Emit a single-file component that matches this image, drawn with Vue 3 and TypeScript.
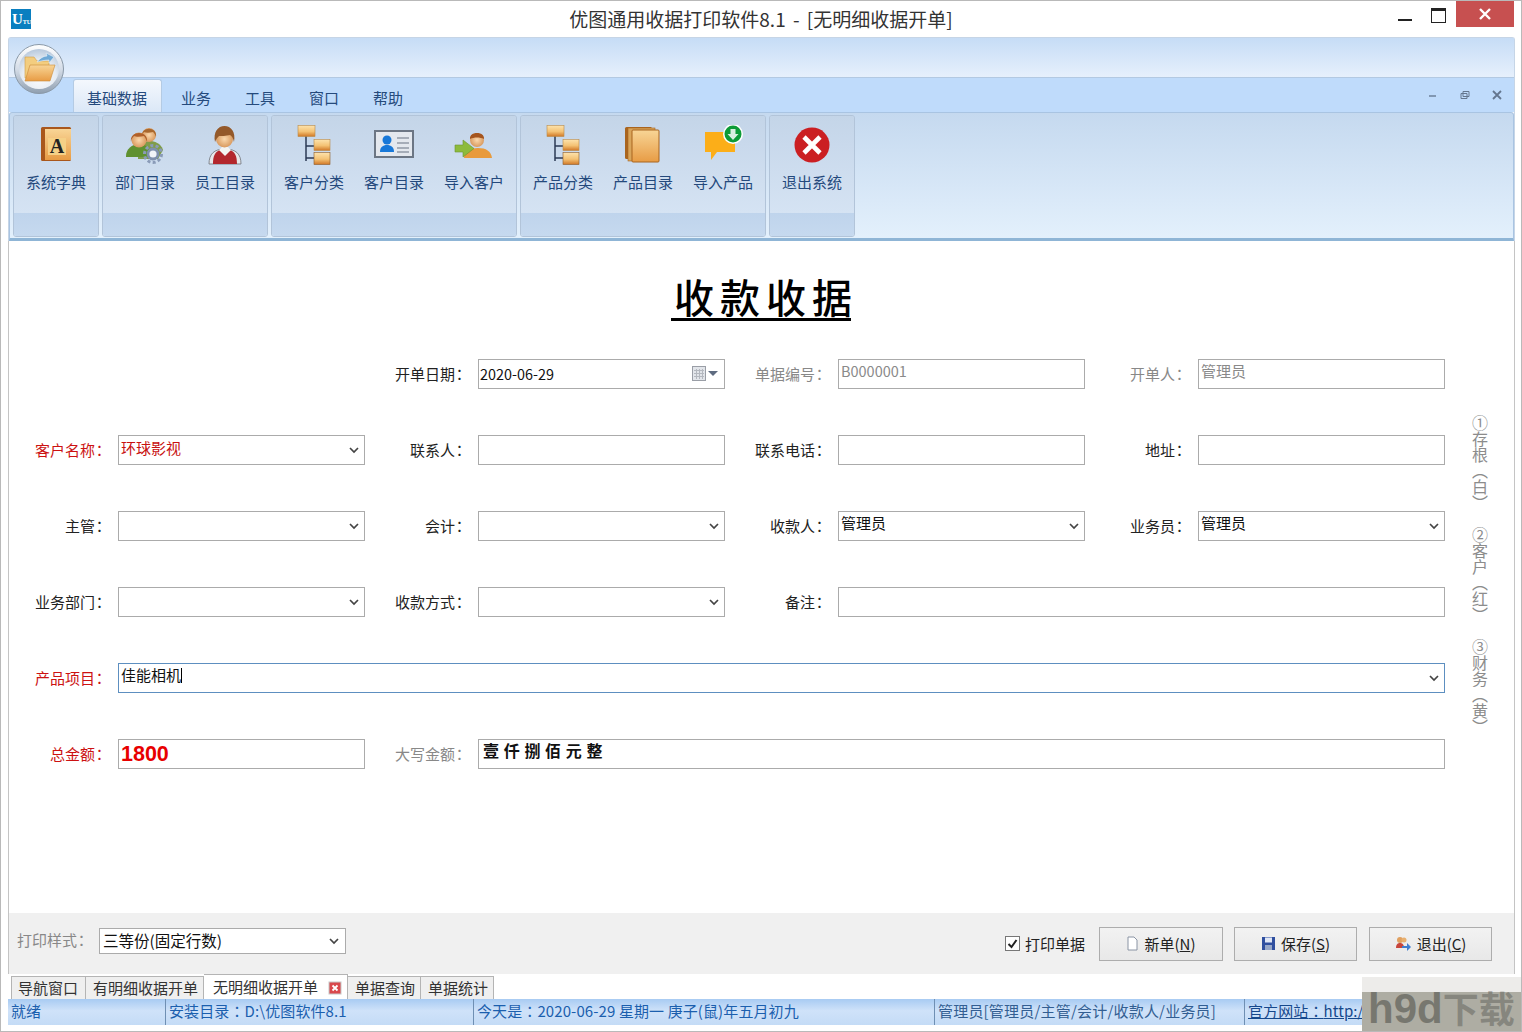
<template>
  <div class="window">
    <header class="titlebar">
      <div class="logo"><span class="logo-u">U</span><span class="logo-tu">TU</span></div>
      <div class="title">优图通用收据打印软件8.1 - [无明细收据开单]</div>
      <div class="win-btns">
        <span class="win-min"></span>
        <span class="win-max"></span>
        <span class="win-close">
          <svg width="14" height="12" viewBox="0 0 14 12"><path d="M2 1l10 10M12 1L2 11" stroke="#fff" stroke-width="2.4" /></svg>
        </span>
      </div>
    </header>

    <div class="main">
      <section class="ribbon">
        <svg width="0" height="0" class="defs">
          <defs>
            <linearGradient id="gold" x1="0" y1="0" x2="0" y2="1"><stop offset="0" stop-color="#f8d596" /><stop offset="1" stop-color="#e89c45" /></linearGradient>
            <linearGradient id="goldbox" x1="0" y1="0" x2="0" y2="1"><stop offset="0" stop-color="#fde3ad" /><stop offset=".55" stop-color="#f4c274" /><stop offset="1" stop-color="#d07726" /></linearGradient>
            <linearGradient id="orb" x1="0" y1="0" x2="0" y2="1"><stop offset="0" stop-color="#ffffff" /><stop offset=".5" stop-color="#d5dde8" /><stop offset="1" stop-color="#8f9fb0" /></linearGradient>
            <radialGradient id="orbin" cx=".5" cy=".7" r=".7"><stop offset="0" stop-color="#fbfcfe" /><stop offset=".6" stop-color="#e6ecf3" /><stop offset="1" stop-color="#b7c8dc" /></radialGradient>
            <radialGradient id="skin"><stop offset="0" stop-color="#fbd9ae" /><stop offset="1" stop-color="#d99a5f" /></radialGradient>
          </defs>
        </svg>
        <div class="qat"></div>
        <div class="orb">
          <svg width="52" height="52" viewBox="0 0 52 52">
            <circle cx="26" cy="26" r="24.5" fill="url(#orb)" stroke="#8a99a8" />
            <circle cx="26" cy="26" r="20" fill="url(#orbin)" />
            <path d="M12 35V14h9l3 4h12v17z" fill="#f3cd7f" stroke="#d29a45" stroke-width=".6" />
            <path d="M24 19c3-4 7-6 10-6l-1-3 8 4-5 6v-3c-4 0-8 1-12 2z" fill="#6fa9d6" stroke="#e8f2fa" stroke-width=".6" />
            <path d="M12 38l5-16h25l-5 16z" fill="url(#gold)" stroke="#c98a36" stroke-width=".6" />
          </svg>
        </div>
        <nav class="tabs">
          <span v-for="(t, i) in ribbonTabs" :key="t" class="tab" :class="{ active: i === 0 }">{{ t }}</span>
          <div class="mdi-btns">
            <svg width="10" height="10" viewBox="0 0 10 10"><path d="M1 6h7" stroke="#7286a0" stroke-width="1.6" /></svg>
            <svg width="10" height="10" viewBox="0 0 10 10"><path d="M3 1.500h6v5H3zM1 3.500h6v5H1z" fill="#bfdbfb" stroke="#64768e" /></svg>
            <svg width="10" height="10" viewBox="0 0 10 10"><path d="M1 1l8 8M9 1L1 9" stroke="#64768e" stroke-width="1.8" /></svg>
          </div>
        </nav>
        <div class="panel">
          <div v-for="(group, gi) in ribbonGroups" :key="gi" class="group">
            <div class="group-body">
              <div v-for="b in group" :key="b.label" class="rb">
                <svg class="rb-icon" width="40" height="40" viewBox="0 0 40 40">
                  <template v-if="b.icon === 'book'">
                    <rect x="5" y="2" width="30" height="34" rx="1.500" fill="#a9571c" />
                    <rect x="9" y="4" width="26" height="31" fill="url(#gold)" />
                    <rect x="12" y="13" width="18" height="17" fill="#f5d086" />
                    <text x="21" y="28" text-anchor="middle" class="book-a">A</text>
                  </template>
                  <template v-else-if="b.icon === 'dept'">
                    <path d="M13 24c1-6 8-8 12-8s11 2 13 9l-5 9H13z" fill="#7f9c4a" />
                    <circle cx="24" cy="10" r="7" fill="url(#skin)" />
                    <path d="M17 12c-2-11 16-11 14 0-1-3-2-4-3-5-4 1-7 1-9 0-1 1-2 3-2 5z" fill="#a9682e" />
                    <path d="M1 31c0-7 6-12 13-12s11 5 12 10v3H1z" fill="#5f9130" />
                    <circle cx="14" cy="15" r="7.500" fill="url(#skin)" />
                    <path d="M6 17c-2-12 18-12 16 0-1-3-2-5-3-6-4 1-8 1-10 0-1 1-3 3-3 6z" fill="#b0602a" />
                    <circle cx="28" cy="29" r="8.500" fill="none" stroke="#8a9bb8" stroke-width="3" stroke-dasharray="3 2.300" />
                    <circle cx="28" cy="29" r="5" fill="#f1f4f8" stroke="#7f90ad" stroke-width="2.800" />
                  </template>
                  <template v-else-if="b.icon === 'staff'">
                    <path d="M4 39c0-10 5-15 16-15s16 5 16 15z" fill="#e6e8eb" stroke="#6d7178" stroke-width=".8" />
                    <path d="M8 39c0-8 2-13 8-14l4 5 4-5c6 1 8 6 8 14z" fill="#b3272d" />
                    <path d="M14 25l6 6 6-6-3-3h-6z" fill="#f4f4f2" />
                    <circle cx="19.500" cy="14" r="8.500" fill="url(#skin)" />
                    <path d="M10 17c-2-10 3-16 9.500-16S31 7 29 17c-1-4-2-6-4-7-4 1-9 1-11 1-1 1-3 3-4 6z" fill="#94592a" />
                  </template>
                  <template v-else-if="b.icon === 'tree'">
                    <path d="M12 10v26M12 21h9M12 33h9" fill="none" stroke="#2b3a55" stroke-width="1.500" />
                    <rect x="4" y="0.500" width="17" height="11" fill="url(#goldbox)" stroke="#b98a4a" stroke-width=".6" />
                    <rect x="20" y="14.500" width="16" height="11" fill="url(#goldbox)" stroke="#b98a4a" stroke-width=".6" />
                    <rect x="20" y="27.500" width="16" height="12" fill="url(#goldbox)" stroke="#8b5a2a" stroke-width=".6" />
                  </template>
                  <template v-else-if="b.icon === 'card'">
                    <rect x="1" y="6" width="38" height="26" fill="#e4e8ee" stroke="#6c7684" stroke-width="2" />
                    <circle cx="13" cy="15" r="4.500" fill="#1878d8" />
                    <path d="M6 27c0-5 3-7 7-7s7 2 7 7z" fill="#1878d8" />
                    <path d="M23 13h12M23 18h12M23 23h12M23 27h12" stroke="#a6adb8" stroke-width="2" />
                  </template>
                  <template v-else-if="b.icon === 'import'">
                    <path d="M10 33c0-7 6-10 14-10s13 3 14 10z" fill="#e89a3c" />
                    <circle cx="23" cy="15" r="7" fill="url(#skin)" />
                    <path d="M16 14c-1-8 15-8 14 0-4-2-10-2-14 0z" fill="#a5551e" />
                    <path d="M1 20h8v-5l11 8.500-11 8.500v-5H1z" fill="#8dbb3c" stroke="#6c9430" stroke-width=".6" />
                  </template>
                  <template v-else-if="b.icon === 'stack'">
                    <rect x="2" y="2" width="27" height="32" rx="1.500" fill="#a9651f" />
                    <rect x="5" y="3" width="27" height="33" fill="#d9a55b" stroke="#a9651f" stroke-width=".6" />
                    <rect x="9" y="5" width="27" height="32" rx="1" fill="url(#gold)" stroke="#a9651f" stroke-width="1" />
                  </template>
                  <template v-else-if="b.icon === 'chat'">
                    <path d="M2 7h30v20H14l-6 8v-8H2z" fill="#fcae18" />
                    <circle cx="30" cy="9" r="10" fill="#fff" />
                    <circle cx="30" cy="9" r="8.500" fill="#0c9b37" />
                    <path d="M27.500 4h5v5h3l-5.500 6-5.500-6h3z" fill="#d8efe0" />
                  </template>
                  <template v-else>
                    <circle cx="20" cy="20" r="17.500" fill="#cb1f22" />
                    <path d="M12 12l16 16M28 12L12 28" stroke="#fff" stroke-width="4.600" />
                  </template>
                </svg>
                <span class="rb-label">{{ b.label }}</span>
              </div>
            </div>
            <div class="group-foot"></div>
          </div>
        </div>
      </section>

      <section class="form-area">
        <h1 class="doc-title">收款收据</h1>
        <div class="form-row-wrap">
          <div class="form-grid">
            <template v-for="f in fields" :key="f.label">
              <label
                class="f-label"
                :class="[f.tone, { muted: f.muted }]"
                :style="f.start ? { gridColumnStart: f.start } : undefined"
              >{{ f.label }}<span class="colon">：</span></label>
              <div
                class="ctrl"
                :class="[f.tone, { focused: f.focused, muted: f.muted, picker: f.kind === 'select' }]"
                :style="f.span ? { gridColumn: `span ${f.span}` } : undefined"
              >
                <span class="ctrl-text" :class="f.textClass">{{ f.value }}<i v-if="f.focused" class="caret"></i></span>
                <svg v-if="f.kind === 'select'" class="chev" width="10" height="7" viewBox="0 0 10 7"><path d="M1 1l4 4 4-4" fill="none" stroke="#444" stroke-width="1.7" /></svg>
                <svg v-if="f.kind === 'date'" class="cal" width="26" height="16" viewBox="0 0 26 16">
                  <rect x="0.500" y="0.500" width="13" height="14" fill="#e2e5ea" stroke="#9a9ea6" />
                  <path d="M2 4.500h10M2 7.500h10M2 10.500h10M4.500 3v10M7.500 3v10M10.500 3v10" stroke="#b4b8bf" />
                  <path d="M16 5h10l-5 5z" fill="#5e6b80" />
                </svg>
              </div>
            </template>
          </div>
          <div class="copies">
            <span v-for="c in copies" :key="c">{{ c }}</span>
          </div>
        </div>
      </section>

      <section class="actions">
        <span class="print-label">打印样式<span class="colon">：</span></span>
        <div class="ctrl print-select">
          <span class="ctrl-text plain">三等份(固定行数)</span>
          <svg class="chev" width="10" height="7" viewBox="0 0 10 7"><path d="M1 1l4 4 4-4" fill="none" stroke="#444" stroke-width="1.7" /></svg>
        </div>
        <div class="spacer"></div>
        <label class="check">
          <span class="check-box">
            <svg width="11" height="10" viewBox="0 0 11 10"><path d="M1.500 5l3 3 5-7" fill="none" stroke="#222" stroke-width="2" /></svg>
          </span>
          打印单据
        </label>
        <button class="act-btn">
          <svg width="13" height="15" viewBox="0 0 13 15"><path d="M2 1h6l3 3v10H2z" fill="#fff" stroke="#8a94a4" /></svg>
          <span>新单(<u>N</u>)</span>
        </button>
        <button class="act-btn">
          <svg width="15" height="15" viewBox="0 0 15 15"><rect x="1" y="1" width="13" height="13" fill="#2f4f9f" /><rect x="4" y="1.500" width="7" height="5" fill="#dfe6f5" /><rect x="4" y="9" width="7" height="5" fill="#98a8c8" /></svg>
          <span>保存(<u>S</u>)</span>
        </button>
        <button class="act-btn">
          <svg width="17" height="15" viewBox="0 0 17 15"><circle cx="5" cy="4" r="3" fill="#e0a060" /><path d="M1 12c0-4 2-5 4-5s4 1 4 5z" fill="#c8463c" /><circle cx="9" cy="4" r="2.500" fill="#e8b070" /><path d="M7 10h5V7l4 4-4 4v-3H7z" fill="#3f7fd0" /></svg>
          <span>退出(<u>C</u>)</span>
        </button>
      </section>

      <nav class="doc-tabs">
        <span v-for="t in docTabs" :key="t" class="doc-tab" :class="{ active: t === activeDoc }">
          {{ t }}
          <svg v-if="t === activeDoc" class="doc-close" width="14" height="14" viewBox="0 0 14 14">
            <rect x="1" y="1" width="12" height="12" fill="#d9484c" stroke="#c8c8c8" />
            <path d="M4.500 4.500l5 5M9.500 4.500l-5 5" stroke="#fff" stroke-width="1.800" />
          </svg>
        </span>
      </nav>

      <footer class="status">
        <span class="cell c1">就绪</span>
        <span class="cell c2">安装目录<span class="colon">：</span>D:\优图软件8.1</span>
        <span class="cell c3">今天是<span class="colon">：</span>2020-06-29 星期一 庚子(鼠)年五月初九</span>
        <span class="cell c4">管理员[管理员/主管/会计/收款人/业务员]</span>
        <span class="cell c5"><u>官方网站<span class="colon">：</span>http:/</u></span>
      </footer>
    </div>

    <div class="watermark">h9d<span class="wm-cjk">下载</span></div>
  </div>
</template>

<script setup lang="ts">
interface RibbonButton {
  label: string
  icon: string
}

interface Field {
  label: string
  value?: string
  kind?: 'select' | 'date'
  tone?: string
  span?: number
  start?: number
  muted?: boolean
  focused?: boolean
  textClass?: string
}

const ribbonTabs = ['基础数据', '业务', '工具', '窗口', '帮助']

const ribbonGroups: RibbonButton[][] = [
  [{ label: '系统字典', icon: 'book' }],
  [
    { label: '部门目录', icon: 'dept' },
    { label: '员工目录', icon: 'staff' }
  ],
  [
    { label: '客户分类', icon: 'tree' },
    { label: '客户目录', icon: 'card' },
    { label: '导入客户', icon: 'import' }
  ],
  [
    { label: '产品分类', icon: 'tree' },
    { label: '产品目录', icon: 'stack' },
    { label: '导入产品', icon: 'chat' }
  ],
  [{ label: '退出系统', icon: 'exit' }]
]

const fields: Field[] = [
  { label: '开单日期', value: '2020-06-29', kind: 'date', start: 3, textClass: 'date' },
  { label: '单据编号', value: 'B0000001', muted: true, textClass: 'code' },
  { label: '开单人', value: '管理员', muted: true },
  { label: '客户名称', value: '环球影视', kind: 'select', tone: 'red' },
  { label: '联系人' },
  { label: '联系电话' },
  { label: '地址' },
  { label: '主管', kind: 'select' },
  { label: '会计', kind: 'select' },
  { label: '收款人', value: '管理员', kind: 'select' },
  { label: '业务员', value: '管理员', kind: 'select' },
  { label: '业务部门', kind: 'select' },
  { label: '收款方式', kind: 'select' },
  { label: '备注', span: 3 },
  { label: '产品项目', value: '佳能相机', kind: 'select', tone: 'red', span: 7, focused: true },
  { label: '总金额', value: '1800', tone: 'red', textClass: 'amount' },
  { label: '大写金额', value: '壹仟捌佰元整', span: 5, muted: true, textClass: 'upper' }
]

const copies = ['①存根（白）', '②客户（红）', '③财务（黄）']

const docTabs = ['导航窗口', '有明细收据开单', '无明细收据开单', '单据查询', '单据统计']
const activeDoc = '无明细收据开单'
</script>

<style>
html,
body {
  margin: 0;
  background: #fff;
}
</style>

<style scoped>
.window {
  position: relative;
  width: 1522px;
  height: 1032px;
  box-sizing: border-box;
  display: flex;
  flex-direction: column;
  overflow: hidden;
  background: #fff;
  border: 1px solid #b9b9b9;
  font-family: "Noto Sans CJK SC", "Liberation Sans", sans-serif;
  font-size: 15px;
  color: #222;
}

.colon {
  font-family: "Noto Sans CJK TC", sans-serif;
}

.titlebar {
  position: relative;
  flex: none;
  height: 36px;
  display: flex;
  justify-content: center;
}

.logo {
  position: absolute;
  left: 10px;
  top: 8px;
  width: 20px;
  height: 20px;
  background: #0a7fc0;
  color: #fff;
  font-family: "Liberation Serif", serif;
  font-weight: 700;
  line-height: 20px;
  white-space: nowrap;
  overflow: hidden;
}

.logo-u {
  font-size: 15px;
  margin-left: 1px;
}

.logo-tu {
  font-size: 6px;
}

.title {
  font-size: 19px;
  line-height: 35px;
  color: #333;
  margin-right: 0;
  white-space: pre;
  word-spacing: 3px;
}

.win-btns {
  position: absolute;
  right: 7px;
  top: 0;
  display: flex;
  align-items: flex-start;
}

.win-min {
  width: 14px;
  height: 2px;
  margin: 18px 19px 0 0;
  background: #222;
}

.win-max {
  width: 13px;
  height: 11px;
  margin: 7px 10px 0 0;
  border: 1px solid #222;
  border-top-width: 3px;
}

.win-close {
  width: 58px;
  height: 26px;
  background: #c75050;
  display: flex;
  align-items: center;
  justify-content: center;
}

.main {
  flex: 1;
  min-height: 0;
  display: flex;
  flex-direction: column;
  margin: 0 6px 6px 7px;
}

.ribbon {
  position: relative;
  flex: none;
  height: 204px;
  display: flex;
  flex-direction: column;
  border: 1px solid #c6d5e6;
  border-bottom: none;
  border-radius: 3px 3px 0 0;
  box-sizing: border-box;
}

.defs {
  position: absolute;
}

.qat {
  flex: none;
  height: 39px;
  background: linear-gradient(#c6dcf6, #e6f0fc);
  border-bottom: 1px solid #b3c9e2;
}

.orb {
  position: absolute;
  left: 4px;
  top: 5px;
  width: 52px;
  height: 52px;
  z-index: 2;
}

.tabs {
  flex: none;
  height: 34px;
  display: flex;
  align-items: flex-end;
  padding-left: 64px;
  background: #bfdbfb;
}

.tab {
  padding: 0 17px;
  height: 28px;
  line-height: 28px;
  font-size: 15px;
  color: #254a7c;
}

.tab.active {
  height: 33px;
  line-height: 35px;
  width: 89px;
  padding: 0 0 0 13px;
  margin-right: 2px;
  box-sizing: border-box;
  background: linear-gradient(#f4f8fd, #dbe8f7);
  border: 1px solid #b4cbe4;
  border-bottom: none;
  border-radius: 3px 3px 0 0;
}

.mdi-btns {
  margin-left: auto;
  align-self: center;
  display: flex;
  gap: 22px;
  padding-right: 12px;
}

.panel {
  flex: 1;
  display: flex;
  gap: 3px;
  padding: 2px 3px 1px;
  border: 1px solid #a9c4e2;
  border-bottom: 3px solid #8fb5d6;
  border-radius: 3px 3px 0 0;
  background: linear-gradient(#c5d9ef, #e3f0fc);
}

.group {
  display: flex;
  flex-direction: column;
  border: 1px solid #b2c4d9;
  border-radius: 3px;
  overflow: hidden;
}

.group-body {
  flex: 1;
  display: flex;
  padding: 0 2px;
  background: linear-gradient(#c4d5e8, #c9d9ec 30%, #d5e3f3);
}

.group-foot {
  flex: none;
  height: 23px;
  background: linear-gradient(#bfd4ec, #c6d9ef);
}

.rb {
  width: 80px;
  display: flex;
  flex-direction: column;
  align-items: center;
  padding-top: 9px;
}

.rb-label {
  margin-top: 7px;
  font-size: 15px;
  line-height: 20px;
  color: #24497c;
}

.book-a {
  font-family: "Liberation Serif", serif;
  font-weight: 700;
  font-size: 20px;
  fill: #222;
}

.form-area {
  flex: 1;
  min-height: 0;
  border-left: 1px solid #c4c4c4;
  border-right: 1px solid #c4c4c4;
}

.doc-title {
  width: 180px;
  margin: 31px 0 38px 662px;
  padding-left: 3px;
  box-sizing: border-box;
  font-size: 40px;
  line-height: 48px;
  height: 49px;
  font-weight: 500;
  letter-spacing: 6px;
  white-space: nowrap;
  color: #000;
  border-bottom: 3px solid #000;
}

.form-row-wrap {
  display: flex;
  align-items: flex-start;
}

.form-grid {
  flex: none;
  display: grid;
  grid-template-columns: 109px 247px 113px 247px 113px 247px 113px 247px;
  grid-auto-rows: 30px;
  row-gap: 46px;
}

.f-label {
  display: flex;
  align-items: center;
  justify-content: flex-end;
  padding: 0 13px 2px 0;
  white-space: nowrap;
  color: #222;
}

.f-label .colon,
.print-label .colon {
  margin: 0 -2px 0 -3px;
}

.f-label.red {
  color: #cc1212;
}

.f-label.muted {
  color: #888;
}

.ctrl {
  position: relative;
  display: flex;
  align-items: center;
  box-sizing: border-box;
  height: 30px;
  padding-left: 2px;
  background: #fff;
  border: 1px solid #ababab;
}

.ctrl.focused {
  border-color: #5d8fc0;
}

.ctrl-text {
  margin-top: -7px;
  white-space: nowrap;
  color: #111;
}

.ctrl.red .ctrl-text {
  margin-top: -5px;
  color: #c81010;
}

.ctrl.focused .ctrl-text {
  margin-top: -7px;
  color: #111;
}

.ctrl.muted .ctrl-text {
  margin-top: -8px;
  color: #8a8a8a;
}

.ctrl.muted .ctrl-text.code {
  font-size: 14.500px;
}

.caret {
  display: inline-block;
  width: 1px;
  height: 15px;
  vertical-align: -2px;
  background: #000;
}

.ctrl-text.date {
  margin: -2px 0 0 -1px;
  font-size: 14.400px;
  color: #111;
}

.ctrl.red .ctrl-text.amount {
  margin-top: 0;
  font-family: "Liberation Sans", sans-serif;
  font-weight: 700;
  font-size: 21.500px;
  color: #e80000;
}

.ctrl.muted .ctrl-text.upper {
  margin: -8px 0 0 2px;
  font-size: 16px;
  font-weight: 700;
  letter-spacing: 4.700px;
  color: #111;
}

.chev {
  position: absolute;
  right: 5px;
  top: 11px;
}

.cal {
  position: absolute;
  right: 6px;
  top: 6px;
}

.copies {
  flex: none;
  margin: 56px 0 0 26px;
  display: flex;
  flex-direction: column;
  gap: 16px;
  font-size: 16px;
  line-height: 18px;
  color: #8c8c8c;
}

.copies span {
  display: block;
  height: 96px;
  writing-mode: vertical-rl;
}

.actions {
  flex: none;
  height: 61px;
  display: flex;
  align-items: center;
  box-sizing: border-box;
  padding: 0 22px 0 8px;
  background: #f0f0f0;
  border-left: 1px solid #c4c4c4;
  border-right: 1px solid #c4c4c4;
}

.print-label {
  align-self: flex-start;
  margin-top: 16px;
  width: 82px;
  color: #888;
  white-space: nowrap;
}

.print-select {
  align-self: flex-start;
  margin-top: 15px;
  width: 247px;
  height: 26px;
  font-size: 15.500px;
}

.print-select .chev {
  top: 9px;
  right: 6px;
}

.ctrl-text.plain {
  margin: -2px 0 0 1px;
}

.spacer {
  flex: 1;
}

.check {
  display: flex;
  align-items: center;
  gap: 5px;
  margin-right: 14px;
  font-size: 15px;
  white-space: nowrap;
}

.check-box {
  width: 13px;
  height: 13px;
  border: 1px solid #777;
  background: #fff;
  display: flex;
  align-items: center;
  justify-content: center;
}

.act-btn {
  width: 123px;
  height: 34px;
  margin-left: 12px;
  display: flex;
  align-items: center;
  justify-content: center;
  gap: 5px;
  padding: 0;
  border: 1px solid #adadad;
  background: linear-gradient(#f2f2f2, #e8e8e8);
  font: inherit;
  font-size: 15px;
  color: #222;
}

.act-btn:first-of-type {
  margin: 0 -1px 0 0;
  width: 124px;
}

.doc-tabs {
  flex: none;
  height: 25px;
  display: flex;
  align-items: flex-end;
  padding-left: 3px;
  background: #fff;
}

.doc-tab {
  height: 22px;
  line-height: 22px;
  padding: 0 5px 0 7px;
  font-size: 15px;
  color: #333;
  background: #efefef;
  border: 1px solid #b4b4b4;
  border-bottom: none;
  border-left: none;
  white-space: nowrap;
}

.doc-tab:first-child {
  border-left: 1px solid #b4b4b4;
  padding: 0 7px 0 6px;
}

.doc-tab.active {
  height: 25px;
  line-height: 23px;
  padding: 0 0 0 9px;
  width: 144px;
  box-sizing: border-box;
  background: #fff;
  display: flex;
  gap: 10px;
  align-items: flex-start;
}

.doc-close {
  margin-top: 6px;
}

.status {
  flex: none;
  height: 26px;
  display: flex;
  box-sizing: border-box;
  background: linear-gradient(#a8cbf3, #cfe2f9 45%, #c4dbf6);
  font-size: 15px;
  line-height: 23px;
  letter-spacing: .1px;
  color: #1b5fae;
}

.cell {
  flex: none;
  box-sizing: border-box;
  padding-left: 3px;
  border-right: 1px solid #6f8fb3;
  white-space: nowrap;
}

.c1 { width: 158px; }
.c2 { width: 308px; }
.c3 { width: 461px; }
.c4 { width: 310px; color: #325e92; letter-spacing: .2px; }
.c5 { flex: 1; border-right: none; color: #15488c; }

.watermark {
  position: absolute;
  left: 1361px;
  top: 976px;
  width: 160px;
  height: 55px;
  background: linear-gradient(#edecea 27%, #aeada3 27%);
  color: #77776f;
  font-family: "Liberation Sans", "Noto Sans CJK SC", sans-serif;
  font-weight: 700;
  font-size: 42px;
  line-height: 64px;
  padding-left: 6px;
  box-sizing: border-box;
  white-space: nowrap;
  overflow: hidden;
}

.wm-cjk {
  font-size: 36px;
  color: #86867e;
}
</style>
